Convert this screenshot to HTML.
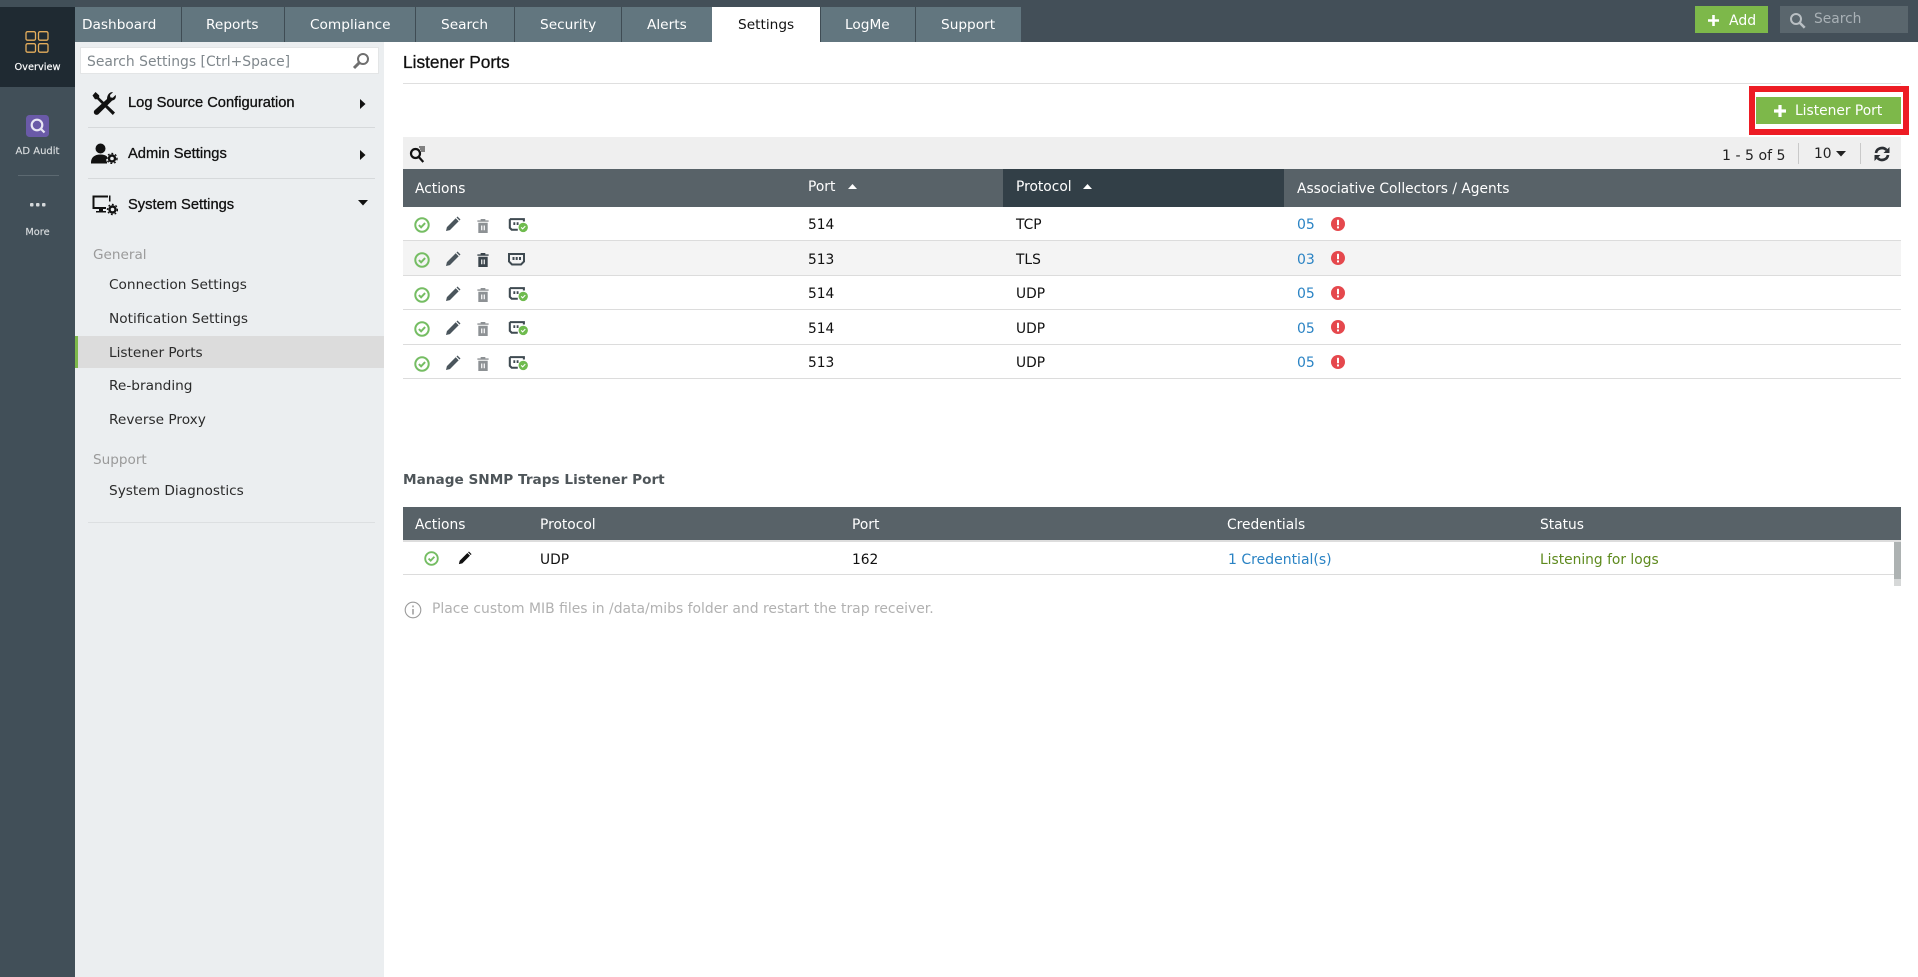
<!DOCTYPE html>
<html><head><meta charset="utf-8"><title>Listener Ports</title>
<style>
html,body{margin:0;padding:0;background:#fff;width:1918px;height:977px;overflow:hidden}
body{position:relative;font-family:"DejaVu Sans","Liberation Sans",sans-serif;font-size:13.8px;color:#222}
.b{position:absolute}
.t{position:absolute;white-space:nowrap;line-height:18px;height:18px}
.tab{color:#fff;font-size:13.7px}
.h{color:#fff;font-size:13.8px}
.l{font-family:"Liberation Sans",sans-serif;font-size:14.7px;color:#111;-webkit-text-stroke:.3px #111}
.m{font-size:13.7px;color:#2b2b2b}
.g{font-size:13.6px;color:#9a9a9a}
.c{font-size:13.8px;color:#111}
.lnk{font-size:14px;color:#2a83c4}
svg{position:absolute;display:block}
</style></head><body>
<svg width="0" height="0" style="position:absolute"><defs>
<symbol id="ok" viewBox="0 0 16 16"><circle cx="8" cy="8" r="6.700" fill="none" stroke="#75bd63" stroke-width="2"/><path d="M4.900 8.100l2.200 2.200 4-4.200" fill="none" stroke="#75bd63" stroke-width="2"/></symbol>
<symbol id="pen" viewBox="0 0 16 16"><path d="M1 15l.9-3.900L10.700 2.300l3 3L4.900 14.100z M11.500 1.500l1-1 3 3-1 1z" fill="currentColor"/></symbol>
<symbol id="tr" viewBox="0 0 14 16"><path d="M1 2.500h3.500V1h5v1.500H13V4H1z" fill="currentColor"/><path d="M2 5h10v11H2z M5 8v5h1.300V8z M7.700 8v5H9V8z" fill="currentColor" fill-rule="evenodd"/></symbol>
<symbol id="prt" viewBox="0 0 22 16"><path d="M1.200 1.200h15v2.500" fill="none" stroke="#3f4a51" stroke-width="2.200"/><path d="M1.200 1.200v9.300l2 2h6.500" fill="none" stroke="#3f4a51" stroke-width="2.200"/><path d="M5 4.500h2v3H5zM8.500 4.500h2v3h-2z" fill="#3f4a51"/><circle cx="15.500" cy="10" r="5" fill="#6fbb4e"/><path d="M13.300 10l1.600 1.600 2.800-2.900" fill="none" stroke="#fff" stroke-width="1.200"/></symbol>
<symbol id="err" viewBox="0 0 14 14"><circle cx="7" cy="7" r="7" fill="#e5484d"/><rect x="6" y="2.800" width="2" height="5.500" rx=".6" fill="#fff"/><rect x="6" y="9.400" width="2" height="2" fill="#fff"/></symbol>
</defs></svg>

<!-- Top bar -->
<div class="b" style="left:0;top:0;width:1918px;height:42px;background:#434f58"></div>
<!-- Left rail -->
<div class="b" style="left:0;top:0;width:75px;height:977px;background:#414f58"></div>
<div class="b" style="left:0;top:7px;width:75px;height:80px;background:#1f2a32"></div>
<svg style="left:25px;top:30px" width="25" height="24" viewBox="0 0 25 24" fill="none" stroke="#e4ad5c" stroke-width="1.300"><rect x="1" y="1.700" width="9.500" height="8.500" rx="1.500"/><rect x="13.500" y="1.700" width="9.500" height="8.500" rx="1.500"/><rect x="1" y="13.700" width="9.500" height="8.500" rx="1.500"/><rect x="13.500" y="13.700" width="9.500" height="8.500" rx="1.500"/></svg>
<div class="t" style="left:0;width:75px;text-align:center;top:59px;color:#fff;font-size:9.800px;-webkit-text-stroke:.15px #fff">Overview</div>
<svg style="left:26px;top:115px" width="23" height="22" viewBox="0 0 23 22"><rect width="23" height="22" rx="3.500" fill="#6a5aa8"/><circle cx="11" cy="10" r="5.300" fill="none" stroke="#e8e6f4" stroke-width="2.200"/><path d="M15 14l3.500 3.500" stroke="#e8e6f4" stroke-width="2.200"/></svg>
<div class="t" style="left:0;width:75px;text-align:center;top:143px;color:#d8dcde;font-size:10px;-webkit-text-stroke:.15px #d8dcde">AD Audit</div>
<div class="b" style="left:18px;top:175px;width:41px;height:1px;background:#5c6971"></div>
<svg style="left:29px;top:202px" width="18" height="6" viewBox="0 0 18 6" fill="#d5d9db"><rect x="1" y="1" width="3.500" height="3.500" rx="1"/><rect x="7" y="1" width="3.500" height="3.500" rx="1"/><rect x="13" y="1" width="3.500" height="3.500" rx="1"/></svg>
<div class="t" style="left:0;width:75px;text-align:center;top:224px;color:#d8dcde;font-size:9.800px;-webkit-text-stroke:.15px #d8dcde">More</div>

<!-- Tabs -->
<div class="b" style="left:75px;top:7px;width:946px;height:35px;background:#62767f"></div>
<div class="b" style="left:181px;top:7px;width:1px;height:35px;background:#3f4c54"></div>
<div class="b" style="left:284px;top:7px;width:1px;height:35px;background:#3f4c54"></div>
<div class="b" style="left:415px;top:7px;width:1px;height:35px;background:#3f4c54"></div>
<div class="b" style="left:514px;top:7px;width:1px;height:35px;background:#3f4c54"></div>
<div class="b" style="left:621px;top:7px;width:1px;height:35px;background:#3f4c54"></div>
<div class="b" style="left:820px;top:7px;width:1px;height:35px;background:#3f4c54"></div>
<div class="b" style="left:915px;top:7px;width:1px;height:35px;background:#3f4c54"></div>
<div class="b" style="left:712px;top:7px;width:108px;height:35px;background:#fff"></div>
<div class="t tab" style="left:82px;top:16px">Dashboard</div>
<div class="t tab" style="left:206px;top:16px">Reports</div>
<div class="t tab" style="left:310px;top:16px">Compliance</div>
<div class="t tab" style="left:441px;top:16px">Search</div>
<div class="t tab" style="left:540px;top:16px">Security</div>
<div class="t tab" style="left:647px;top:16px">Alerts</div>
<div class="t tab" style="left:738px;top:16px;color:#111">Settings</div>
<div class="t tab" style="left:845px;top:16px">LogMe</div>
<div class="t tab" style="left:941px;top:16px">Support</div>

<!-- Add + search -->
<div class="b" style="left:1695px;top:6px;width:73px;height:27px;background:#7db84a"></div>
<svg style="left:1708px;top:15px" width="11" height="11" viewBox="0 0 11 11"><path d="M4.200 0h2.600v4.200H11v2.600H6.800V11H4.200V6.800H0V4.200h4.200z" fill="#fff"/></svg>
<div class="t" style="left:1729px;top:12px;color:#fff;font-size:14px">Add</div>
<div class="b" style="left:1780px;top:6px;width:128px;height:27px;background:#5a666d"></div>
<svg style="left:1789px;top:12px" width="17" height="17" viewBox="0 0 17 17" fill="none" stroke="#b9bfc3" stroke-width="2"><circle cx="7" cy="7" r="5"/><path d="M10.700 10.700l5 5" stroke-width="2.500"/></svg>
<div class="t" style="left:1814px;top:10px;color:#a9b1b6;font-size:13.8px">Search</div>

<!-- Settings panel -->
<div class="b" style="left:75px;top:42px;width:309px;height:935px;background:#ebeef0"></div>
<div class="b" style="left:80px;top:47px;width:299px;height:27px;background:#fff;border:1px solid #e3e5e6;box-sizing:border-box"></div>
<div class="t" style="left:87px;top:52px;color:#7f878c;font-size:13.9px;line-height:20px">Search Settings [Ctrl+Space]</div>
<svg style="left:352px;top:52px" width="18" height="18" viewBox="0 0 18 18" fill="none" stroke="#6f6f6f" stroke-width="2"><circle cx="11" cy="7" r="5"/><path d="M7.300 10.700L2 16" stroke-width="3"/></svg>

<svg style="left:92px;top:91px" width="25" height="25" viewBox="0 0 25 25"><path d="M3.500 1l3.700 3.400v2.200L23 21.500 20.800 24 5.200 8.200H3L.5 4.500z" fill="#111"/><path d="M21 1.200l-3 2.800.4 2.400 2.400.4 2.900-2.900c.6 2.700-.4 5.200-3.600 5.700L7 22.600c-1 1.600-3.400 1.500-4.400.4-1.100-1.300-1-3 .3-4L15 8c.2-4.500 2.700-7.300 6-6.800z" fill="#111"/></svg>
<div class="t l" style="left:128px;top:94px">Log Source Configuration</div>
<svg style="left:360px;top:99px" width="6" height="10" viewBox="0 0 6 10"><path d="M0 0l5.500 5L0 10z" fill="#111"/></svg>
<div class="b" style="left:88px;top:127px;width:287px;height:1px;background:#d6d9db"></div>

<svg style="left:91px;top:143px" width="27" height="21" viewBox="0 0 27 21"><circle cx="9.500" cy="5.500" r="5" fill="#111"/><path d="M0 19.500c0-5 3.500-8 9.500-8 3 0 5 .8 6.500 2v1.500c-1 1-1 3 0 4v1.500H0z" fill="#111"/><circle cx="21" cy="15.500" r="3" fill="none" stroke="#111" stroke-width="2.400"/><circle cx="21" cy="15.500" r="5" fill="none" stroke="#111" stroke-width="1.400" stroke-dasharray="1.800 2"/></svg>
<div class="t l" style="left:128px;top:145px">Admin Settings</div>
<svg style="left:360px;top:150px" width="6" height="10" viewBox="0 0 6 10"><path d="M0 0l5.500 5L0 10z" fill="#111"/></svg>
<div class="b" style="left:88px;top:178px;width:287px;height:1px;background:#d6d9db"></div>

<svg style="left:92px;top:194px" width="26" height="22" viewBox="0 0 26 22"><path d="M16 2.500H1.500v11.500H14" fill="none" stroke="#111" stroke-width="2"/><path d="M17 1.500h1.500v6H17z" fill="#111"/><path d="M7 15h4v2h3v1.500H4V17h3z" fill="#111"/><circle cx="20.500" cy="15.500" r="3" fill="none" stroke="#111" stroke-width="2.400"/><circle cx="20.500" cy="15.500" r="5" fill="none" stroke="#111" stroke-width="1.400" stroke-dasharray="1.800 2"/></svg>
<div class="t l" style="left:128px;top:196px">System Settings</div>
<svg style="left:358px;top:200px" width="10" height="6" viewBox="0 0 10 6"><path d="M0 0h10L5 5.500z" fill="#111"/></svg>

<div class="t g" style="left:93px;top:246px">General</div>
<div class="t m" style="left:109px;top:276px">Connection Settings</div>
<div class="t m" style="left:109px;top:310px">Notification Settings</div>
<div class="b" style="left:75px;top:336px;width:309px;height:32px;background:#dcdcdc"></div>
<div class="b" style="left:75px;top:336px;width:3px;height:32px;background:#7db84a"></div>
<div class="t m" style="left:109px;top:344px">Listener Ports</div>
<div class="t m" style="left:109px;top:377px">Re-branding</div>
<div class="t m" style="left:109px;top:411px">Reverse Proxy</div>
<div class="t g" style="left:93px;top:451px">Support</div>
<div class="t m" style="left:109px;top:482px">System Diagnostics</div>
<div class="b" style="left:88px;top:522px;width:287px;height:1px;background:#dcdfe1"></div>

<!-- Main -->
<div class="t" style="left:403px;top:53px;font-family:'Liberation Sans',sans-serif;font-size:17.3px;color:#111;-webkit-text-stroke:.3px #111">Listener Ports</div>
<div class="b" style="left:403px;top:83px;width:1498px;height:1px;background:#dfdfdf"></div>

<div class="b" style="left:1749px;top:86px;width:160px;height:49px;box-sizing:border-box;border:6px solid #ed1c24"></div>
<div class="b" style="left:1756px;top:97px;width:145px;height:27px;background:#7db84a"></div>
<svg style="left:1774px;top:105px" width="12" height="12" viewBox="0 0 12 12"><path d="M4.400 0h3.200v4.400H12v3.200H7.600V12H4.400V7.600H0V4.400h4.400z" fill="#fff"/></svg>
<div class="t" style="left:1795px;top:102px;color:#fff;font-size:13.8px">Listener Port</div>

<!-- toolbar -->
<div class="b" style="left:403px;top:137px;width:1498px;height:32px;background:#efefef"></div>
<svg style="left:409px;top:146px" width="17" height="17" viewBox="0 0 17 17" fill="none" stroke="#111"><circle cx="6.500" cy="7.500" r="4.500" stroke-width="2.200"/><path d="M9.800 11l4.500 5" stroke-width="2.200"/><path d="M10 1h6M11 3h5M12 5h4" stroke-width="1"/></svg>
<div class="t" style="left:1722px;top:147px;color:#222;font-size:14.1px">1 - 5 of 5</div>
<div class="b" style="left:1798px;top:143px;width:1px;height:21px;background:#c9c9c9"></div>
<div class="t" style="left:1814px;top:145px;color:#222;font-size:13.8px">10</div>
<svg style="left:1836px;top:151px" width="10" height="6" viewBox="0 0 10 6"><path d="M0 0h10L5 5.500z" fill="#222"/></svg>
<div class="b" style="left:1860px;top:143px;width:1px;height:21px;background:#c9c9c9"></div>
<svg style="left:1874px;top:146px" width="16" height="16" viewBox="0 0 16 16" fill="none" stroke="#2b2f33" stroke-width="2.700"><path d="M2 7a6 5.500 0 0 1 10.500-3"/><path d="M14 9a6 5.500 0 0 1-10.500 3"/><path d="M15.500 1v6h-6z" fill="#2b2f33" stroke="none"/><path d="M.5 15V9h6z" fill="#2b2f33" stroke="none"/></svg>

<!-- table 1 -->
<div class="b" style="left:403px;top:169px;width:1498px;height:38px;background:#586268"></div>
<div class="b" style="left:1003px;top:169px;width:281px;height:38px;background:#323f47"></div>
<div class="t h" style="left:415px;top:180px">Actions</div>
<div class="t h" style="left:808px;top:178px">Port</div>
<svg style="left:848px;top:184px" width="9" height="5" viewBox="0 0 9 5"><path d="M4.500 0L9 5H0z" fill="#fff"/></svg>
<div class="t h" style="left:1016px;top:178px">Protocol</div>
<svg style="left:1083px;top:184px" width="9" height="5" viewBox="0 0 9 5"><path d="M4.500 0L9 5H0z" fill="#fff"/></svg>
<div class="t h" style="left:1297px;top:180px">Associative Collectors / Agents</div>

<div class="b" style="left:403px;top:241px;width:1498px;height:34px;background:#f4f4f4"></div>
<div class="b" style="left:403px;top:240px;width:1498px;height:1px;background:#dcdcdc"></div>
<div class="b" style="left:403px;top:275px;width:1498px;height:1px;background:#dcdcdc"></div>
<div class="b" style="left:403px;top:309px;width:1498px;height:1px;background:#dcdcdc"></div>
<div class="b" style="left:403px;top:344px;width:1498px;height:1px;background:#dcdcdc"></div>
<div class="b" style="left:403px;top:378px;width:1498px;height:1px;background:#dcdcdc"></div>

<!-- row 1 -->
<svg style="left:414px;top:217px" width="16" height="16"><use href="#ok"/></svg>
<svg style="left:445px;top:216px;color:#4a555c" width="16" height="16"><use href="#pen"/></svg>
<svg style="left:476px;top:218px;color:#8d9194" width="14" height="15"><use href="#tr"/></svg>
<svg style="left:508px;top:218px" width="22" height="15"><use href="#prt"/></svg>
<div class="t c" style="left:808px;top:216px">514</div><div class="t c" style="left:1016px;top:216px">TCP</div>
<div class="t lnk" style="left:1297px;top:216px">05</div>
<svg style="left:1331px;top:217px" width="14" height="14"><use href="#err"/></svg>
<!-- row 2 -->
<svg style="left:414px;top:252px" width="16" height="16"><use href="#ok"/></svg>
<svg style="left:445px;top:251px;color:#4a555c" width="16" height="16"><use href="#pen"/></svg>
<svg style="left:476px;top:252px;color:#3a444b" width="14" height="15"><use href="#tr"/></svg>
<svg style="left:508px;top:253px" width="17" height="13" viewBox="0 0 17 13"><path d="M1 1h15v7.500l-3 3H4l-3-3z" fill="none" stroke="#3f4a51" stroke-width="2"/><path d="M4.500 4h2v3h-2zM7.700 4h2v3h-2zM11 4h2v3h-2z" fill="#3f4a51"/></svg>
<div class="t c" style="left:808px;top:251px">513</div><div class="t c" style="left:1016px;top:251px">TLS</div>
<div class="t lnk" style="left:1297px;top:251px">03</div>
<svg style="left:1331px;top:251px" width="14" height="14"><use href="#err"/></svg>
<!-- row 3 -->
<svg style="left:414px;top:287px" width="16" height="16"><use href="#ok"/></svg>
<svg style="left:445px;top:286px;color:#4a555c" width="16" height="16"><use href="#pen"/></svg>
<svg style="left:476px;top:287px;color:#8d9194" width="14" height="15"><use href="#tr"/></svg>
<svg style="left:508px;top:287px" width="22" height="15"><use href="#prt"/></svg>
<div class="t c" style="left:808px;top:285px">514</div><div class="t c" style="left:1016px;top:285px">UDP</div>
<div class="t lnk" style="left:1297px;top:285px">05</div>
<svg style="left:1331px;top:286px" width="14" height="14"><use href="#err"/></svg>
<!-- row 4 -->
<svg style="left:414px;top:321px" width="16" height="16"><use href="#ok"/></svg>
<svg style="left:445px;top:320px;color:#4a555c" width="16" height="16"><use href="#pen"/></svg>
<svg style="left:476px;top:321px;color:#8d9194" width="14" height="15"><use href="#tr"/></svg>
<svg style="left:508px;top:321px" width="22" height="15"><use href="#prt"/></svg>
<div class="t c" style="left:808px;top:320px">514</div><div class="t c" style="left:1016px;top:320px">UDP</div>
<div class="t lnk" style="left:1297px;top:320px">05</div>
<svg style="left:1331px;top:320px" width="14" height="14"><use href="#err"/></svg>
<!-- row 5 -->
<svg style="left:414px;top:356px" width="16" height="16"><use href="#ok"/></svg>
<svg style="left:445px;top:355px;color:#4a555c" width="16" height="16"><use href="#pen"/></svg>
<svg style="left:476px;top:356px;color:#8d9194" width="14" height="15"><use href="#tr"/></svg>
<svg style="left:508px;top:356px" width="22" height="15"><use href="#prt"/></svg>
<div class="t c" style="left:808px;top:354px">513</div><div class="t c" style="left:1016px;top:354px">UDP</div>
<div class="t lnk" style="left:1297px;top:354px">05</div>
<svg style="left:1331px;top:355px" width="14" height="14"><use href="#err"/></svg>

<!-- SNMP -->
<div class="t" style="left:403px;top:471px;font-weight:bold;color:#4e5559;font-size:13.65px">Manage SNMP Traps Listener Port</div>
<div class="b" style="left:403px;top:507px;width:1498px;height:33px;background:#586268"></div>
<div class="b" style="left:403px;top:540px;width:1498px;height:2px;background:#dddddd"></div>
<div class="t h" style="left:415px;top:516px;">Actions</div>
<div class="t h" style="left:540px;top:516px">Protocol</div>
<div class="t h" style="left:852px;top:516px">Port</div>
<div class="t h" style="left:1227px;top:516px">Credentials</div>
<div class="t h" style="left:1540px;top:516px">Status</div>
<svg style="left:424px;top:551px" width="15" height="15"><use href="#ok"/></svg>
<svg style="left:458px;top:551px;color:#111" width="14" height="14"><use href="#pen"/></svg>
<div class="t c" style="left:540px;top:551px">UDP</div>
<div class="t c" style="left:852px;top:551px">162</div>
<div class="t lnk" style="left:1228px;top:551px">1 Credential(s)</div>
<div class="t" style="left:1540px;top:551px;color:#5e8a1e;font-size:13.8px">Listening for logs</div>
<div class="b" style="left:403px;top:574px;width:1491px;height:1px;background:#dcdcdc"></div>
<div class="b" style="left:1894px;top:542px;width:7px;height:37px;background:#adb2b2"></div>
<div class="b" style="left:1894px;top:579px;width:7px;height:7px;background:#d6d8d8"></div>
<svg style="left:404px;top:601px" width="18" height="18" viewBox="0 0 18 18" fill="none" stroke="#9a9a9a" stroke-width="1.100"><circle cx="9" cy="9" r="7.800"/><path d="M9 8v5.500" stroke-width="1.500"/><path d="M9 4.500v1.800" stroke-width="1.500"/></svg>
<div class="t" style="left:432px;top:600px;color:#b1b1b1;font-size:13.92px">Place custom MIB files in /data/mibs folder and restart the trap receiver.</div>
</body></html>
